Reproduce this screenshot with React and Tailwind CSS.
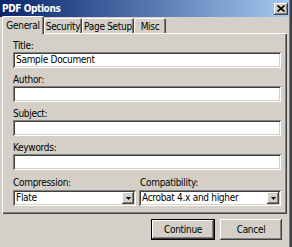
import React from "react";

const raised =
  "bg-[#d4d0c8] shadow-[inset_-1px_-1px_#404040,inset_1px_1px_#ffffff,inset_-2px_-2px_#808080]";
const sunken =
  "bg-white shadow-[inset_1px_1px_#808080,inset_-1px_-1px_#ffffff,inset_2px_2px_#404040,inset_-2px_-2px_#d4d0c8]";

function Field({ label, value }) {
  return (
    <div className="flex flex-col">
      <div className="h-[12px] leading-[12px]">{label}</div>
      <div className={`${sunken} h-[16px] leading-[16px] pl-[3px]`}>{value}</div>
    </div>
  );
}

function Select({ value }) {
  return (
    <div className={`${sunken} h-[16px] flex items-center pl-[3px] pr-[2px]`}>
      <span className="flex-1 leading-[16px] whitespace-nowrap">{value}</span>
      <div className={`${raised} w-[12px] h-[12px] flex items-center justify-center`}>
        <svg width="5" height="3" viewBox="0 0 5 3">
          <path d="M0 0h5L2.5 3z" fill="#000" />
        </svg>
      </div>
    </div>
  );
}

function Tab({ label, active, width }) {
  if (active) {
    return (
      <div
        className={`${width} shrink-0 whitespace-nowrap h-[18px] relative z-10 -mb-[1px] bg-[#d4d0c8] rounded-t-[2px] shadow-[inset_1px_1px_#ffffff,inset_-1px_0_#404040,inset_-2px_0_#808080] flex items-start justify-center pt-[2px]`}
      >
        {label}
      </div>
    );
  }
  return (
    <div
      className={`${width} shrink-0 whitespace-nowrap h-[15px] bg-[#d4d0c8] rounded-t-[2px] shadow-[inset_1px_1px_#ffffff,inset_-1px_0_#404040,inset_-2px_0_#808080] flex items-start justify-center pt-[1px]`}
    >
      {label}
    </div>
  );
}

export default function App() {
  return (
    <div className="w-[292px] h-[247px] bg-[#d4d0c8] font-['DejaVu_Sans_Condensed','Liberation_Sans',sans-serif] text-[10px] tracking-[-0.3px] text-black overflow-hidden border-r-2 border-[#404040]">
      <div className="border-r border-[#808080] h-full flex flex-col">
        {/* title bar */}
        <div className="h-[17px] bg-linear-to-r from-[#0a246a] to-[#a6caf0] flex items-center justify-between pl-[2px] pr-[1px]">
          <span className="text-white font-bold text-[10px] tracking-[-0.4px] leading-[16px]">PDF Options</span>
          <div className={`${raised} w-[14px] h-[12px] flex items-center justify-center`}>
            <svg width="8" height="7" viewBox="0 0 8 7">
              <path d="M0.5 0.5L7.5 6.5M7.5 0.5L0.5 6.5" stroke="#000" strokeWidth="1.6" />
            </svg>
          </div>
        </div>

        {/* tabs */}
        <div className="flex items-end px-[2px] h-[16px]">
          <Tab label="General" active width="w-[42px]" />
          <Tab label="Security" width="w-[38px]" />
          <Tab label="Page Setup" width="w-[52px]" />
          <Tab label="Misc" width="w-[32px]" />
        </div>

        {/* panel */}
        <div className="mx-[2px] h-[181px] shadow-[inset_1px_1px_#ffffff,inset_-1px_-1px_#404040,inset_-2px_-2px_#808080] pt-[7px] pl-[11px] pr-[6px] flex flex-col gap-[6px]">
          <Field label="Title:" value="Sample Document" />
          <Field label="Author:" value="" />
          <Field label="Subject:" value="" />
          <Field label="Keywords:" value="" />
          <div className="grid grid-cols-[123px_1fr] gap-[3px] mt-[1px]">
            <div className="flex flex-col">
              <div className="h-[13px] leading-[12px]">Compression:</div>
              <Select value="Flate" />
            </div>
            <div className="flex flex-col">
              <div className="h-[13px] leading-[12px] pl-[1px]">Compatibility:</div>
              <Select value="Acrobat 4.x and higher" />
            </div>
          </div>
        </div>

        {/* buttons */}
        <div className="flex justify-end gap-[5px] pt-[5px] pr-[7px]">
          <div className="w-[64px] h-[21px] border border-black">
            <div className={`${raised} w-full h-full flex items-center justify-center`}>Continue</div>
          </div>
          <div className={`${raised} w-[62px] h-[21px] flex items-center justify-center`}>Cancel</div>
        </div>
      </div>
    </div>
  );
}
